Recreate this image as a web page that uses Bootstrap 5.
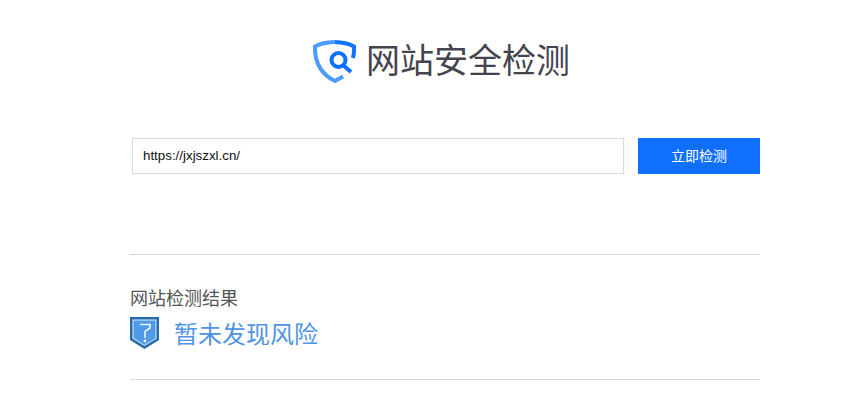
<!DOCTYPE html>
<html>
<head>
    <meta charset="UTF-8">
    <title>网站安全检测</title>
    <link href="https://cdn.jsdelivr.net/npm/bootstrap@5.3.5/dist/css/bootstrap.min.css" rel="stylesheet">
    <style>
        body {
            font-family: "Liberation Sans", "Noto Sans CJK SC", sans-serif;
            overflow: hidden;
        }
        .page-wrap {
            width: 630px;
            margin-left: 130px;
        }
        .site-head {
            height: 138px;
            padding: 40px 0 0 183px;
        }
        .site-title {
            font-size: 34px;
            line-height: 43px;
            color: #44444f;
            margin-left: 10px;
        }
        .check-form {
            padding-left: 2px;
            height: 116px;
        }
        .url-box {
            width: 492px;
            height: 36px;
            border: 1px solid #d9d9d9;
            border-radius: 0;
            font-size: 13.33px;
            color: #111;
            padding: 0 10px 2px;
        }
        .check-btn {
            width: 122px;
            height: 36px;
            margin-left: 14px;
            background: #0f6fff;
            color: #fff;
            font-size: 14px;
            border: 0;
            border-radius: 0;
        }
        .result-box {
            border-top: 1px solid #d9d9d9;
            border-bottom: 1px solid #d9d9d9;
            height: 126px;
            padding-top: 32px;
        }
        .result-label {
            font-size: 18px;
            line-height: 24px;
            color: #555;
            margin-bottom: 6px;
        }
        .result-text {
            font-size: 24px;
            line-height: 34px;
            color: #4f94e4;
            margin-left: 15px;
            padding-top: 1px;
        }
    </style>
</head>
<body>
<div class="page-wrap">
    <div class="site-head d-flex align-items-start">
        <svg width="43" height="43" viewBox="0 0 43 43">
            <path d="M21.5 2 C14 2.2 7 3.6 2 6.4 C1.6 20 6 33 22 41 L30 36.5" fill="none" stroke="#4c9bff" stroke-width="4"/>
            <path d="M21.5 2 C29 2.2 36 3.6 41 6.4 C41.2 10 41 14 40 18" fill="none" stroke="#1374ff" stroke-width="4"/>
            <circle cx="25.5" cy="20" r="7" fill="none" stroke="#0f6fff" stroke-width="4"/>
            <path d="M30.5 25.5 L38 32" fill="none" stroke="#0f6fff" stroke-width="4"/>
        </svg>
        <div class="site-title">网站安全检测</div>
    </div>
    <div class="check-form d-flex align-items-start">
        <input class="form-control url-box" type="text" value="https://jxjszxl.cn/">
        <button class="btn check-btn" type="button">立即检测</button>
    </div>
    <div class="result-box">
        <div class="result-label">网站检测结果</div>
        <div class="d-flex align-items-start">
            <svg width="29" height="32" viewBox="0 0 29 32">
                <path d="M0 0 H29 V23 L14.5 32 L0 23 Z" fill="#2a6cb0"/>
                <path d="M2.5 2.5 H26.5 V21.5 L14.5 29 L2.5 21.5 Z" fill="#dcecfb"/>
                <path d="M3.5 3.5 H25.5 V21 L14.5 28 L3.5 21 Z" fill="#4f9be8"/>
                <path d="M10 7.5 H20 V11 L15 14.5 V21" fill="none" stroke="#eef6fe" stroke-width="1.6"/>
                <circle cx="15" cy="24" r="1.4" fill="#eef6fe"/>
            </svg>
            <div class="result-text">暂未发现风险</div>
        </div>
    </div>
</div>
<script src="https://cdn.jsdelivr.net/npm/bootstrap@5.3.5/dist/js/bootstrap.bundle.min.js"></script>
</body>
</html>
